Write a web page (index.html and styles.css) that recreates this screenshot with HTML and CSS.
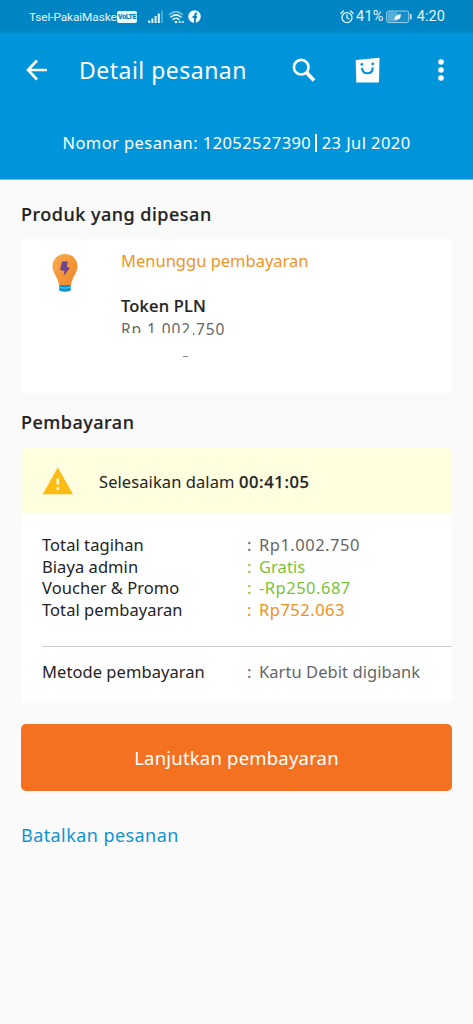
FILE: index.html
```html
<!DOCTYPE html>
<html lang="id">
<head>
<meta charset="utf-8">
<meta name="viewport" content="width=device-width, initial-scale=1">
<title>Detail pesanan</title>
<link rel="stylesheet" href="styles.css">
</head>
<body>
<div class="statusbar">
  <span class="carrier">Tsel-PakaiMaske</span>
  <span class="volte">VoLTE</span>
  <svg class="signal" width="16" height="14" viewBox="0 0 16 14"><path d="M1.2 10.5V13M4.4 8.5V13M7.6 6V13M10.8 3.5V13" stroke="#e4f6fc" stroke-width="2"/><path d="M14 .5V13" stroke="#58b2dc" stroke-width="1.6"/></svg>
  <svg class="wifi" width="17" height="14" viewBox="0 0 17 14"><g fill="none" stroke-linecap="round"><path d="M1.5 4.5Q8 -1.2 14.5 4.5" stroke="#7bc4e4" stroke-width="1.5"/><path d="M3 7Q8 2.7 13 7M5 9.5Q8 7 11 9.5" stroke="#e4f6fc" stroke-width="1.6"/></g><g fill="#e4f6fc"><circle cx="8" cy="12" r="1.3"/><circle cx="11.7" cy="12" r="1.1"/><circle cx="14.8" cy="12" r="1.1"/></g></svg>
  <svg class="fb" width="13" height="13" viewBox="0 0 13 13"><circle cx="6.5" cy="6.5" r="6.3" fill="#eefaff"/><path d="M7 13V5.2Q7 3.4 9.2 3.5M4.6 7H9" stroke="#0085c4" stroke-width="1.8" fill="none"/></svg>
  <svg class="alarm" width="14" height="14" viewBox="0 0 14 14"><g fill="none" stroke="#e4f6fc" stroke-width="1.3" stroke-linecap="round"><circle cx="7" cy="7.6" r="5"/><path d="M7 4.8V7.8L9 9M.8 3.4L3.4 1M13.2 3.4L10.6 1"/></g></svg>
  <span class="percent">41%</span>
  <svg class="battery" width="26" height="14" viewBox="0 0 26 14"><rect x=".7" y="1" width="22" height="11.6" rx="2" fill="#178fca" stroke="#9bd2eb"/><path d="M2 2.2H11V11.4H2z" fill="#57aed8"/><path d="M8.500 10Q7.800 4.800 14.800 4Q15 10.300 9.800 9.800z" fill="#f0fbff"/><path d="M24.8 4V9.6" stroke="#c7e9f6" stroke-width="1.6"/></svg>
  <span class="clock">4:20</span>
</div>
<header class="header">
  <div class="toolbar">
    <svg class="back" width="22" height="22" viewBox="0 0 22 22"><path d="M11 1.5L2 11L11 20.5M2.4 11H21" fill="none" stroke="#fff" stroke-width="2.6"/></svg>
    <h1 class="title">Detail pesanan</h1>
    <svg class="search" width="24" height="25" viewBox="0 0 24 25"><circle cx="9.2" cy="9.2" r="7.3" fill="none" stroke="#fff" stroke-width="2.6"/><path d="M14.3 14.3L22 22.4" stroke="#fff" stroke-width="3.6"/></svg>
    <svg class="bag" width="26" height="26" viewBox="0 0 26 26"><path d="M.7 3L24.5 .8L24 25.5H1.3z" fill="#fff"/><g fill="#0095da"><circle cx="6.800" cy="7.300" r="1.400"/><circle cx="17.800" cy="7" r="1.400"/></g><path d="M7 10.800Q7.400 16.300 12.600 16.300Q17.600 16.300 17.800 10.400" fill="none" stroke="#0095da" stroke-width="2.100"/></svg>
    <svg class="more" width="6" height="22" viewBox="0 0 6 22"><g fill="#fff"><circle cx="3" cy="3" r="2.8"/><circle cx="3" cy="11" r="2.8"/><circle cx="3" cy="19" r="2.8"/></g></svg>
  </div>
  <p class="order"><span>Nomor pesanan: 12052527390</span><i class="bar"></i><span>23 Jul 2020</span></p>
</header>
<main class="content">
  <h2 class="heading product-heading">Produk yang dipesan</h2>
  <section class="card product">
    <svg class="bulb" width="28" height="40" viewBox="0 0 28 40"><defs><linearGradient id="glass" x1="0" y1="0" x2="1" y2="1"><stop offset="0" stop-color="#f9ac4e"/><stop offset="1" stop-color="#f08428"/></linearGradient></defs><path d="M14 1C6.500 1 1.500 6.500 1.500 13.500C1.500 20 7 24 8 32H20C21 24 26.500 20 26.500 13.500C26.500 6.500 21.500 1 14 1z" fill="url(#glass)"/><path d="M11 8.500H16.800L15.800 13.800L19 15L12.500 23L13.500 18L9 17z" fill="#70458f"/><path d="M8.200 32H19.800V37.500Q14 40 8.200 37.500z" fill="#0795cf"/><path d="M8 34.600Q14 35.800 20 34.300" stroke="#62c6df" fill="none"/></svg>
    <div class="info">
      <p class="status">Menunggu pembayaran</p>
      <p class="name">Token PLN</p>
      <p class="price">Rp 1.002.750</p>
      <div class="remnant"></div>
    </div>
  </section>
  <h2 class="heading payment-heading">Pembayaran</h2>
  <section class="card payment">
    <div class="notice">
      <svg class="warning" width="32" height="28" viewBox="0 0 32 28"><path d="M15.800 .5L31 27.300H.7z" fill="#fdbc14"/><path d="M15.800 11.500V17.500M15.800 20V23" stroke="#fff5cd" stroke-width="2.800"/></svg>
      <p class="deadline">Selesaikan dalam <b class="timer">00:41:05</b></p>
    </div>
    <dl class="rows">
      <dt>Total tagihan</dt><dd class="amount"><span class="colon">:</span>Rp1.002.750</dd>
      <dt>Biaya admin</dt><dd class="green"><span class="colon">:</span>Gratis</dd>
      <dt>Voucher &amp; Promo</dt><dd class="amount green"><span class="colon">:</span>-Rp250.687</dd>
      <dt>Total pembayaran</dt><dd class="amount orange"><span class="colon">:</span>Rp752.063</dd>
    </dl>
    <dl class="rows method">
      <dt>Metode pembayaran</dt><dd><span class="colon">:</span>Kartu Debit digibank</dd>
    </dl>
  </section>
  <button class="pay">Lanjutkan pembayaran</button>
  <a class="cancel">Batalkan pesanan</a>
</main>
</body>
</html>
```
FILE: styles.css
```css
* { box-sizing: border-box; }
body { margin: 0; min-height: 1024px; background: #fafafa; color: #242424; font-family: "Noto Sans", sans-serif; font-size: 16.500px; }
h1, h2, p, dl, dd { margin: 0; }
svg { display: block; flex: none; }

.statusbar { height: 33px; padding: 0 28px 0 29px; display: flex; align-items: center; background: linear-gradient(#0085c4 29px, #008bcc); color: #e4f6fc; font-family: Roboto, sans-serif; white-space: nowrap; }
.carrier { width: 88px; overflow: hidden; font-size: 11.800px; line-height: 18px; letter-spacing: -.08px; }
.volte { width: 20px; height: 12px; border-radius: 2px; background: #e8f8fd; color: #0085c4; font-size: 7px; font-weight: 900; line-height: 12px; text-align: center; letter-spacing: -.4px; }
.signal { margin-left: 11px; }
.wifi { margin-left: 4px; }
.fb { margin-left: 3px; }
.alarm { margin-left: auto; }
.percent { margin-left: 2px; font-size: 14.500px; letter-spacing: .2px; }
.battery { margin-left: 2px; }
.clock { margin-left: 3px; font-size: 14.500px; letter-spacing: .1px; }
.alarm, .percent, .battery { position: relative; left: -2px; }

.header { height: 147px; background: #0095da; border-bottom: 1px solid #63bde6; color: #fff; }
.toolbar { height: 74px; padding: 0 29px 0 26px; display: flex; align-items: center; }
.title { width: 180px; margin-left: 31px; font-size: 23px; font-weight: 400; line-height: 32px; letter-spacing: .48px; white-space: nowrap; }
.search { margin-left: 33px; }
.bag { margin-left: 39px; }
.more { margin-left: auto; }
.order { display: flex; justify-content: center; align-items: center; padding-top: 24px; line-height: 24px; letter-spacing: .42px; white-space: nowrap; }
.bar { width: 1.500px; height: 18px; margin: 0 5px 0 4px; background: #fff; }

.content { padding: 0 21px; }
.heading { font-size: 18px; font-weight: 500; line-height: 26px; letter-spacing: .5px; -webkit-text-stroke: .2px; white-space: nowrap; }
.product-heading { padding-top: 21px; }
.payment-heading { margin-top: 16px; }
.card { background: #fff; border-radius: 4px; overflow: hidden; }
.product { height: 154px; margin-top: 12px; padding: 10px 0 0 30px; display: flex; }
.bulb { margin-top: 4px; }
.info { margin-left: 42px; white-space: nowrap; }
.status { color: #ee9428; line-height: 24px; }
.name { margin-top: 21px; font-weight: 500; line-height: 24px; letter-spacing: .2px; -webkit-text-stroke: .2px; }
.price { position: relative; width: 120px; color: #666; font-size: 15.500px; line-height: 22px; letter-spacing: .9px; }
.price::after { content: ""; position: absolute; left: 0; top: 15px; width: 72px; height: 8px; background: #fff; }
.remnant { width: 5px; height: 1px; margin: 16px 0 0 62px; background: #888; }

.payment { height: 255px; margin-top: 13px; }
.notice { height: 65px; padding: 1px 0 0 21px; display: flex; align-items: center; background: #fffedf; }
.deadline { margin-left: 25px; letter-spacing: .08px; white-space: nowrap; }
.timer { font-weight: 500; letter-spacing: .65px; -webkit-text-stroke: .25px; }
.rows { display: grid; grid-template-columns: 205px 1fr; margin-left: 21px; padding-top: 21px; line-height: 21.500px; letter-spacing: .06px; white-space: nowrap; }
.rows dd { display: flex; color: #666; }
.rows .amount { letter-spacing: .5px; }
.rows .green { color: #7cc139; }
.rows .orange { color: #f18e22; }
.colon { flex: none; width: 12px; }
.method { margin-top: 26px; padding-top: 14px; border-top: 1px solid #ccc; }
.pay { display: block; width: 100%; height: 67px; margin-top: 21px; padding: 0; border: 0; border-radius: 5px; background: #f47121; color: #fff; font: 18.500px "Noto Sans", sans-serif; letter-spacing: .2px; }
.cancel { display: block; margin-top: 31px; color: #1093d2; font-size: 18px; line-height: 26px; letter-spacing: .43px; }
```
